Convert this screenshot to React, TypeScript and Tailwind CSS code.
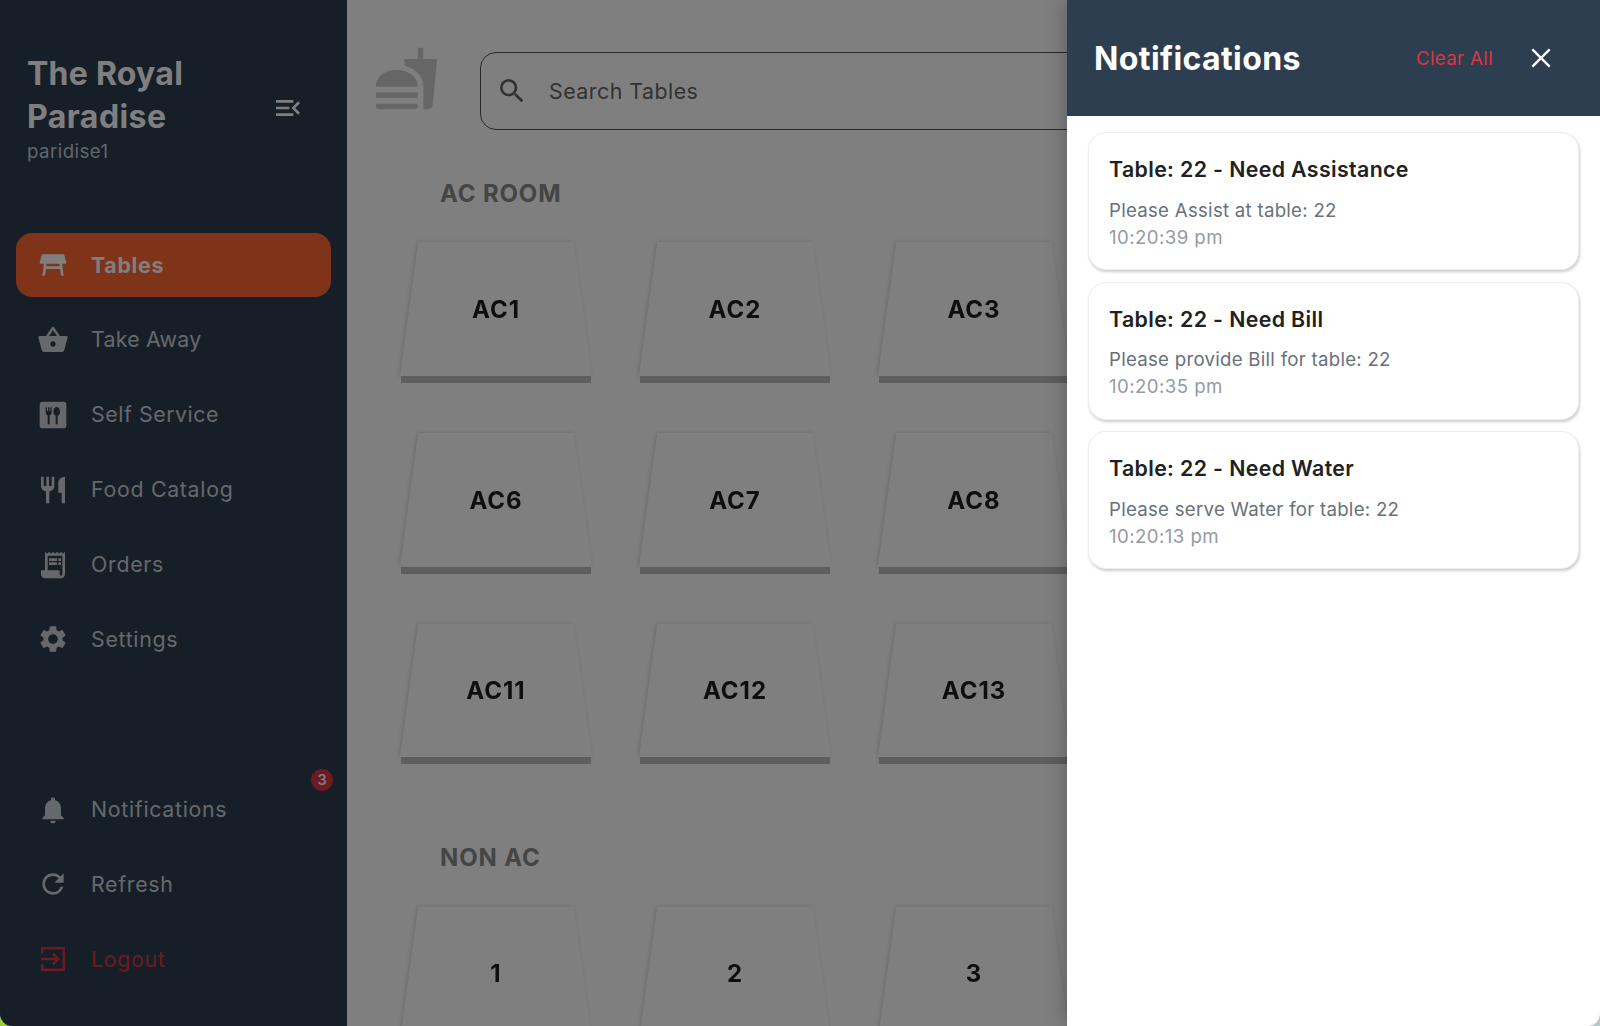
import type { IconType } from "react-icons";
import {
  MdDining,
  MdFastfood,
  MdMenuOpen,
  MdNotifications,
  MdReceiptLong,
  MdRefresh,
  MdRestaurant,
  MdSearch,
  MdSettings,
  MdShoppingBasket,
  MdTableRestaurant,
} from "react-icons/md";

type IconProps = { className?: string };

function LogoutIcon({ className }: IconProps) {
  return (
    <svg viewBox="0 0 24 24" className={className} fill="none" stroke="currentColor" strokeWidth="1.8">
      <path d="M3.9 8V3.9h16.2v16.2H3.9V16" />
      <path d="M3 12h13M12 8l4 4-4 4" />
    </svg>
  );
}

function CloseIcon({ className }: IconProps) {
  return (
    <svg viewBox="0 0 24 24" className={className} fill="none" stroke="currentColor" strokeWidth="1.8">
      <path d="M5.5 5.5l13 13M18.5 5.5l-13 13" />
    </svg>
  );
}

type NavItemProps = {
  icon: IconType | typeof LogoutIcon;
  label: string;
  spacing?: string;
  active?: boolean;
  danger?: boolean;
};

function NavItem({ icon: Icon, label, spacing = "tracking-[0.7px]", active, danger }: NavItemProps) {
  const tone = active ? "bg-[#ff6633] font-bold text-white" : danger ? "text-[#dc3545]" : "text-[#ced1d6]";
  return (
    <button className={`flex h-16 w-full items-center gap-[22px] rounded-2xl pl-[21px] text-[21.33px] ${spacing} ${tone}`}>
      <Icon className="size-8" />
      <span className="pt-px">{label}</span>
    </button>
  );
}

function TableCard({ name }: { name: string }) {
  return (
    <div className="h-[142px] w-[192px] shrink-0">
      <div className="drop-shadow-[-1px_0px_2px_rgba(0,0,0,0.17)]">
        <div className="flex h-[134px] items-center justify-center bg-white pt-[2px] text-[24px] font-bold tracking-[1px] text-[#1c1c1e] [clip-path:polygon(9.5%_0,90.5%_0,100%_100%,0_100%)]">
          {name}
        </div>
      </div>
      <div className="relative mx-px h-[7px] bg-[#bdbdbd]" />
    </div>
  );
}

function Section({ title, rows }: { title: string; rows: string[][] }) {
  return (
    <section>
      <h2 className="pl-[40px] text-[24px] leading-[30px] font-bold tracking-[0.85px] text-[#8a8a8a]">{title}</h2>
      <div className="mt-[33px] flex flex-col gap-[48.7px]">
        {rows.map((r) => (
          <div key={r[0]} className="flex gap-[47px]">
            {r.map((n) => (
              <TableCard key={n} name={n} />
            ))}
          </div>
        ))}
      </div>
    </section>
  );
}

function Notice({ title, body, time }: { title: string; body: string; time: string }) {
  return (
    <li className="h-[138px] rounded-[18px] border border-[#eeeeee] bg-white px-5 pt-[21px] shadow-[1px_2px_3px_rgba(0,0,0,0.2)]">
      <h3 className="text-[21.33px] leading-[30px] font-semibold tracking-[0.37px] text-[#212121]">{title}</h3>
      <p className="mt-[12.5px] text-[18.67px] leading-[27px] tracking-[0.26px] text-[#68717a]">{body}</p>
      <p className="text-[18.67px] leading-[27px] tracking-[0.42px] text-[#959aa7]">{time}</p>
    </li>
  );
}

export default function App() {
  return (
    <div className="h-[1026px] w-[1600px] overflow-hidden bg-[linear-gradient(90deg,#9ccc3c_50%,#b5c9c9_50%)] font-['Inter',sans-serif]">
      <div className="relative flex h-full w-full overflow-hidden rounded-b-[12px] bg-white">
        <aside className="flex w-[347px] shrink-0 flex-col bg-[#2c3e50] px-4">
          <header className="flex h-[217px] items-center justify-between pr-[27px] pl-[11px]">
            <div>
              <h1 className="w-[175px] text-[32px] leading-[43px] font-bold text-white">
                <span className="tracking-[0.25px]">The Royal</span> <span className="tracking-[0.45px]">Paradise</span>
              </h1>
              <p className="text-[18.67px] leading-[28px] tracking-[0.45px] text-[#c8cbd0]">paridise1</p>
            </div>
            <MdMenuOpen className="mb-[2px] size-8 text-white" />
          </header>
          <nav className="mt-4 flex flex-col gap-[10.9px]">
            <NavItem icon={MdTableRestaurant} label="Tables" active />
            <NavItem icon={MdShoppingBasket} label="Take Away" spacing="tracking-[0.25px]" />
            <NavItem icon={MdDining} label="Self Service" spacing="tracking-[0.55px]" />
            <NavItem icon={MdRestaurant} label="Food Catalog" />
            <NavItem icon={MdReceiptLong} label="Orders" />
            <NavItem icon={MdSettings} label="Settings" />
          </nav>
          <div className="relative mt-[106.3px] flex flex-col gap-[10.7px]">
            <NavItem icon={MdNotifications} label="Notifications" />
            <NavItem icon={MdRefresh} label="Refresh" />
            <NavItem icon={LogoutIcon} label="Logout" danger />
            <span className="absolute -top-[9px] right-[-2px] flex size-[22px] items-center justify-center rounded-full bg-[#dc3545] text-[14.67px] font-medium text-white">
              3
            </span>
          </div>
        </aside>
        <main className="min-w-0 flex-1 overflow-hidden">
          <div className="flex pt-[52px] pl-[26px]">
            <MdFastfood className="-mt-[7px] size-[67px] text-[#cccccc]" />
            <div className="ml-[40px] flex h-[78px] w-[800px] shrink-0 items-center rounded-2xl border border-[#555] pl-[15px] text-[#646464]">
              <MdSearch className="size-8" />
              <span className="ml-[21px] pt-[2px] text-[21.33px] tracking-[0.5px]">Search Tables</span>
            </div>
          </div>
          <div className="flex flex-col gap-[78px] pt-[49px] pl-[53px]">
            <Section
              title="AC ROOM"
              rows={[
                ["AC1", "AC2", "AC3"],
                ["AC6", "AC7", "AC8"],
                ["AC11", "AC12", "AC13"],
              ]}
            />
            <Section title="NON AC" rows={[["1", "2", "3"]]} />
          </div>
        </main>
        <div className="absolute inset-0 bg-black/50" />
        <div className="absolute inset-y-0 right-0 w-[533px] bg-white shadow-[0_0_20px_rgba(0,0,0,0.3)]">
          <header className="flex h-[116px] items-center bg-[#2c3e50] pr-[43px] pl-[27px]">
            <h2 className="flex-1 pt-px text-[32px] font-bold tracking-[0.4px] text-white">Notifications</h2>
            <button className="pt-[2px] text-[18.67px] tracking-[0.35px] text-[#dc3545]">Clear All</button>
            <CloseIcon className="mb-px ml-[32px] size-8 text-white" />
          </header>
          <ul className="flex flex-col gap-[11.5px] px-[21px] pt-4">
            <Notice title="Table: 22 - Need Assistance" body="Please Assist at table: 22" time="10:20:39 pm" />
            <Notice title="Table: 22 - Need Bill" body="Please provide Bill for table: 22" time="10:20:35 pm" />
            <Notice title="Table: 22 - Need Water" body="Please serve Water for table: 22" time="10:20:13 pm" />
          </ul>
        </div>
      </div>
    </div>
  );
}
